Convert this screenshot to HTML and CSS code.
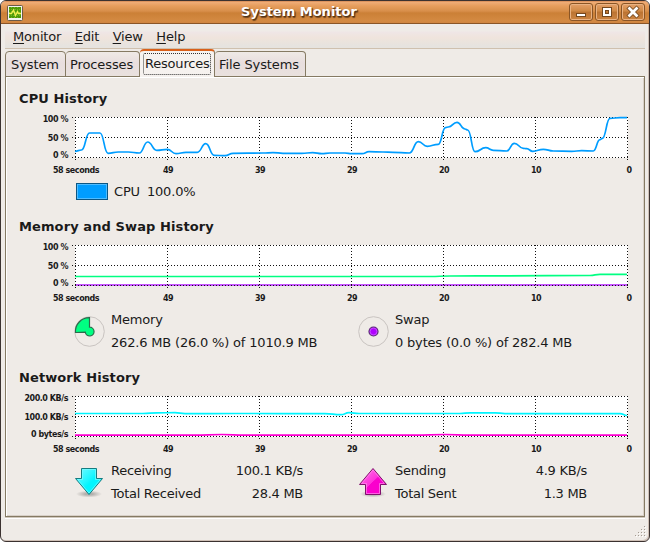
FILE: index.html
```
<!DOCTYPE html>
<html lang="en">
<head>
    <meta charset="UTF-8">
    <title>System Monitor</title>
    <link rel="stylesheet" href="styles.css">
</head>
<body>

<div class="window">
    <div class="titlebar">
        <svg class="app-icon" width="16" height="16" viewBox="0 0 16 16">
            <rect x="0.5" y="0.5" width="15" height="15" rx="1" fill="#f4f4ee" stroke="#6b5a48"/>
            <rect x="2" y="2" width="12" height="11" fill="#4e9a06"/>
            <path d="M2 4.5H14M2 7.5H14M2 10.5H14M4.5 2V13M7.5 2V13M10.5 2V13" stroke="#73b52b" stroke-dasharray="1 1"/>
            <path d="M2 8.5H4.5L6.5 5L8.5 10.5L10.5 6.5L11.5 8.5H14" fill="none" stroke="#f5f04f" stroke-width="1.3"/>
        </svg>
        <h1>System Monitor</h1>
        <div class="window-buttons">
            <button aria-label="Minimize">
                <svg width="24" height="18"><rect x="7.5" y="10.5" width="9" height="3" fill="#fff" stroke="#74481f"/></svg>
            </button>
            <button aria-label="Maximize">
                <svg width="24" height="18"><rect x="9" y="6" width="6" height="6" fill="none" stroke="#74481f" stroke-width="4"/><rect x="9" y="6" width="6" height="6" fill="none" stroke="#fff" stroke-width="2"/></svg>
            </button>
            <button aria-label="Close">
                <svg width="24" height="18"><path d="M8.5 5.5L15.5 12.5M15.5 5.5L8.5 12.5" stroke="#74481f" stroke-width="4.4" stroke-linecap="square"/><path d="M8.5 5.5L15.5 12.5M15.5 5.5L8.5 12.5" stroke="#fff" stroke-width="2.8" stroke-linecap="square"/></svg>
            </button>
        </div>
    </div>

    <div class="menubar">
        <a><u>M</u>onitor</a>
        <a><u>E</u>dit</a>
        <a><u>V</u>iew</a>
        <a><u>H</u>elp</a>
    </div>

    <div class="tabs">
        <div class="tab tab-system">System</div>
        <div class="tab tab-processes">Processes</div>
        <div class="tab active"><span>Resources</span></div>
        <div class="tab tab-files">File Systems</div>
    </div>

    <div class="page">
        <section class="cpu">
            <h2>CPU History</h2>
            <svg class="chart" width="638" height="72">
                <defs>
                    <g id="grid">
                        <path d="M-3 0.5H553M-3 20.5H553M-3 40.5H553"/>
                        <path d="M0.5 0V45M92.5 0V45M184.5 0V45M276.5 0V45M368.5 0V45M460.5 0V45M552.5 0V45"/>
                    </g>
                    <g id="seconds">
                        <text x="1" y="56">58 seconds</text>
                        <text x="93" y="56">49</text>
                        <text x="185" y="56">39</text>
                        <text x="277" y="56">29</text>
                        <text x="369" y="56">20</text>
                        <text x="461" y="56">10</text>
                        <text x="554" y="56">0</text>
                    </g>
                </defs>
                <g transform="translate(69 11)">
                    <rect class="plot" width="553" height="41"/>
                    <use href="#grid" class="grid"/>
                    <path id="cpu-line" class="line" stroke="#009dff"/>
                    <g class="values">
                        <text x="-7" y="5">100 %</text>
                        <text x="-7" y="24">50 %</text>
                        <text x="-7" y="41">0 %</text>
                    </g>
                    <use href="#seconds" class="seconds"/>
                </g>
            </svg>
            <div class="legend">
                <div class="swatch"></div>
                <span>CPU</span>
                <span class="percent">100.0%</span>
            </div>
        </section>

        <section class="memory">
            <h2>Memory and Swap History</h2>
            <svg class="chart" width="638" height="72">
                <g transform="translate(69 11)">
                    <rect class="plot" width="553" height="41"/>
                    <path id="memory-line" class="line" stroke="#00ff82"/>
                    <path id="swap-line" class="line" stroke="#b41eff"/>
                    <use href="#grid" class="grid"/>
                    <g class="values">
                        <text x="-7" y="5">100 %</text>
                        <text x="-7" y="24">50 %</text>
                        <text x="-7" y="41">0 %</text>
                    </g>
                    <use href="#seconds" class="seconds"/>
                </g>
            </svg>
            <div class="legend">
                <div class="item">
                    <svg class="icon" width="32" height="32">
                        <circle cx="15.5" cy="15.5" r="14.8" fill="none" stroke="#c9c4c1"/>
                        <path d="M15.5 1.7A13.8 13.8 0 0 0 1.5 16.5L11.3 16.2A4.4 4.4 0 1 0 15.5 11.2Z" fill="#00ff82" stroke="#2c6b4c" stroke-width="1.2"/>
                    </svg>
                    <div class="rows">
                        <div>Memory</div>
                        <div>262.6 MB (26.0 %) of 1010.9 MB</div>
                    </div>
                </div>
                <div class="item">
                    <svg class="icon" width="32" height="32">
                        <circle cx="15.5" cy="15.5" r="14.8" fill="none" stroke="#c9c4c1"/>
                        <circle cx="15.5" cy="15.5" r="4.5" fill="#b000ff" stroke="#572d70" stroke-width="1.2"/>
                        <circle cx="15.5" cy="15.5" r="3.4" fill="none" stroke="#ca5cff" stroke-width="0.8"/>
                    </svg>
                    <div class="rows">
                        <div>Swap</div>
                        <div>0 bytes (0.0 %) of 282.4 MB</div>
                    </div>
                </div>
            </div>
        </section>

        <section class="network">
            <h2>Network History</h2>
            <svg class="chart" width="638" height="72">
                <g transform="translate(69 11)">
                    <rect class="plot" width="553" height="41"/>
                    <use href="#grid" class="grid"/>
                    <path id="receive-line" class="line" stroke="#00f5ff"/>
                    <path id="send-line" class="line" stroke="#ff00d2"/>
                    <g class="values">
                        <text x="-7" y="5">200.0 KB/s</text>
                        <text x="-7" y="24">100.0 KB/s</text>
                        <text x="-7" y="41">0 bytes/s</text>
                    </g>
                    <use href="#seconds" class="seconds"/>
                </g>
            </svg>
            <div class="legend">
                <div class="item">
                    <svg class="icon" width="32" height="32">
                        <defs>
                            <radialGradient id="shadow">
                                <stop offset="0.3" stop-color="#000" stop-opacity="0.25"/>
                                <stop offset="1" stop-color="#000" stop-opacity="0"/>
                            </radialGradient>
                            <linearGradient id="cyan" x1="0" y1="0" x2="1" y2="1">
                                <stop offset="0" stop-color="#7dfaff"/>
                                <stop offset="0.45" stop-color="#1cf6ff"/>
                                <stop offset="0.55" stop-color="#00f5ff"/>
                            </linearGradient>
                            <linearGradient id="pink" x1="0" y1="0" x2="1" y2="1">
                                <stop offset="0" stop-color="#ff7de8"/>
                                <stop offset="0.5" stop-color="#ff30dc"/>
                                <stop offset="0.51" stop-color="#fa00cd"/>
                            </linearGradient>
                        </defs>
                        <ellipse cx="15" cy="27" rx="13" ry="3.5" fill="url(#shadow)"/>
                        <path d="M7.5 1.5H22.5V11.5H28.5L15 27.5L1.5 11.5H7.5Z" fill="url(#cyan)" stroke="#157c80"/>
                        <path d="M8.5 2.5H21.5V12.5H26.3L15 26L3.7 12.5H8.5Z" fill="none" stroke="#7dfaff" stroke-opacity="0.7"/>
                    </svg>
                    <div class="rows">
                        <div><span>Receiving</span><span>100.1 KB/s</span></div>
                        <div><span>Total Received</span><span>28.4 MB</span></div>
                    </div>
                </div>
                <div class="item">
                    <svg class="icon" width="32" height="32">
                        <ellipse cx="15" cy="27" rx="13" ry="3.5" fill="url(#shadow)"/>
                        <path d="M15 1.5L28.5 17.5H22.5V27.5H7.5V17.5H1.5Z" fill="url(#pink)" stroke="#80106c"/>
                        <path d="M15 3L26.3 16.5H21.5V26.5H8.5V16.5H3.7Z" fill="none" stroke="#ff8aeb" stroke-opacity="0.7"/>
                    </svg>
                    <div class="rows">
                        <div><span>Sending</span><span>4.9 KB/s</span></div>
                        <div><span>Total Sent</span><span>1.3 MB</span></div>
                    </div>
                </div>
            </div>
        </section>
    </div>

    <div class="statusbar">
        <svg width="12" height="12">
            <path d="M10 0.5h1M7 3.5h4M4 6.5h7M1 9.5h10" stroke="#a39b92" stroke-dasharray="1 2"/>
            <path d="M11 1.5h1M8 4.5h4M5 7.5h7M2 10.5h10" stroke="#fff" stroke-dasharray="1 2"/>
        </svg>
    </div>
</div>

<script src="script.js"></script>
</body>
</html>
```

FILE: styles.css
```
* {
    box-sizing: border-box;
}
body {
    margin: 0;
    background-color: #fff;
    font-family: "DejaVu Sans", sans-serif;
    font-size: 13px;
    letter-spacing: -0.18px;
    color: #1a1a1a;
}
.window {
    width: 650px;
    height: 542px;
    display: flex;
    flex-direction: column;
    background-color: #efebe7;
    border: 1px solid #3b3230;
    border-radius: 6px;
    overflow: hidden;
    box-shadow: inset -1px -1px 0 #cfc0b6;
}
.titlebar {
    height: 23px;
    display: flex;
    align-items: center;
    padding: 0 4px 0 6px;
    background: linear-gradient(#c97b45 0, #f0ad78 1px, #e69d5c 5px, #d88f4b 10px, #cb8036 12px, #d48a42 20px, #cf8440 22px);
    border-bottom: 1px solid #8a5526;
}
.app-icon {
    margin-top: 2px;
}
.titlebar h1 {
    flex: 1;
    margin: 0 0 0 6px;
    font-size: 13px;
    line-height: 22px;
    letter-spacing: 0;
    text-align: center;
    color: #fff;
    text-shadow: 1px 1px 1px #4a2e14, 1px 2px 1px #7a4a20;
}
.window-buttons {
    display: flex;
    gap: 2px;
}
.window-buttons button {
    width: 24px;
    height: 18px;
    padding: 0;
    border: 1px solid #8a5526;
    border-radius: 3px;
    background: linear-gradient(#e4a069, #cf8844 45%, #bb7332 50%, #cd8542);
    box-shadow: inset 0 0 0 1px #e9b283;
}
.window-buttons svg {
    display: block;
    margin: -1px;
}
.menubar {
    height: 25px;
    margin: 0 4px;
    padding: 0 8px;
    display: flex;
    gap: 13.5px;
    line-height: 25px;
    background: linear-gradient(#efebe7 0, #efebe7 7px, #efe6e6 8px, #efe4dc 14px, #e6e3df 22px);
    border-bottom: 1px solid #cfc0ae;
}
.menubar u {
    text-underline-offset: 2px;
}
.tabs {
    height: 28px;
    margin: 0 4px -1px;
    display: flex;
    align-items: flex-end;
    position: relative;
    z-index: 1;
}
.tab {
    height: 26px;
    padding-left: 4px;
    line-height: 26px;
    letter-spacing: -0.1px;
    border: 1px solid #857a63;
    border-left-width: 0;
    border-radius: 4px 4px 0 0;
    background: linear-gradient(#efeae6, #e8dede 45%, #e9e1de);
}
.tab-system {
    width: 61px;
    padding-left: 5px;
    border-left-width: 1px;
}
.tab-processes {
    width: 74px;
}
.tab-files {
    width: 91px;
}
.tab.active {
    width: 75px;
    height: 28px;
    padding: 2px 3px 0 3px;
    letter-spacing: -0.2px;
    border-top: 2px solid #d9601a;
    border-bottom: none;
    background: #f6f2ef;
}
.tab.active span {
    display: block;
    height: 22px;
    padding-left: 1px;
    line-height: 20px;
    border: 1px dotted #333;
    border-radius: 2px;
}
.page {
    height: 441px;
    margin: 0 4px;
    padding: 13px 0 0;
    border: 1px solid #857a63;
    box-shadow: inset 1px 1px 0 #fff, inset -1px -1px 0 #d8d0c8, 0 1px 0 #d0c8be, 0 2px 0 #fff;
}
section {
    height: 151px;
}
.cpu {
    height: 128px;
}
h2 {
    height: 16px;
    margin: 0;
    padding-left: 13px;
    font-size: 13px;
    line-height: 18px;
    letter-spacing: 0.1px;
}
.chart {
    display: block;
}
.plot {
    fill: #fff;
}
.grid {
    fill: none;
    stroke: #111;
    stroke-width: 1;
    stroke-dasharray: 1 2;
}
.line {
    fill: none;
    stroke-width: 1.7;
}
.values, .seconds {
    font-size: 8px;
    font-weight: bold;
    letter-spacing: -0.45px;
    fill: #1a1a1a;
}
.values {
    text-anchor: end;
}
.seconds {
    text-anchor: middle;
}
.legend {
    display: flex;
    padding: 2px 0 0 68px;
    line-height: 23px;
}
.swatch {
    width: 32px;
    height: 17px;
    margin: 3px 6px 0 2px;
    background-color: #009dff;
    border: 1px solid #0b5683;
    box-shadow: inset 0 0 0 1px #4fbcff;
}
.percent {
    margin-left: 7px;
}
.item {
    width: 284px;
    display: flex;
}
.icon {
    width: 32px;
    margin: 8px 5px 0 0;
}
.rows {
    width: 192px;
    white-space: nowrap;
}
.rows div {
    display: flex;
    justify-content: space-between;
}
.network .rows {
    letter-spacing: -0.27px;
}
.statusbar {
    flex: 1;
    display: flex;
    justify-content: flex-end;
    padding: 9px 3px 0 0;
}
```

FILE: script.js
```
// points are x, y in plot pixels
const series = {
    'cpu-line': [[0, 34.3], [6.5, 33], [14.5, 16], [25, 16], [33, 36.3], [43.3, 35], [53.3, 35], [64.3, 36], [72.7, 25], [81.7, 33.3],
        [92.3, 32.3], [101, 36.7], [111, 35.3], [122.3, 35.3], [130.7, 26.7], [139.3, 38.3], [150, 38.7], [158, 36.3], [188, 36],
        [198, 35.6], [208, 36.3], [226.7, 36.3], [237.7, 35.7], [246.7, 36.7], [255, 36], [270, 36], [276.7, 36.7], [287, 36.7],
        [294, 34.7], [308, 35], [318, 35.3], [334.3, 36], [343.3, 24.7], [352.3, 29.3], [363.3, 27.3], [370.5, 10.7], [373.3, 10],
        [382, 5.3], [390, 12], [392.7, 13], [400, 34.7], [410.7, 30.7], [418.3, 33.3], [431.7, 34], [439.3, 26.3], [448.3, 31.3],
        [451.7, 31.7], [457.7, 34.3], [468.3, 32.3], [478.3, 34], [496.7, 34.3], [506.7, 33.7], [518.3, 34], [525, 22.7],
        [527.3, 21.3], [535, 1.3], [545, 0.7], [552, 0.7]],
    'memory-line': [[0, 31.5], [355, 31.5], [375, 31], [430, 30.8], [515, 30.5], [525, 29.4], [552, 29.4]],
    'swap-line': [[0, 40], [552, 40]],
    'receive-line': [[0, 17.5], [68, 17.5], [82, 16.8], [100, 16.7], [110, 17.6], [160, 17.5], [250, 17.6], [266, 18.7], [274, 16.6],
        [284, 17.5], [385, 17.5], [395, 16.8], [420, 16.8], [430, 17.6], [545, 17.6], [552, 19.5]],
    'send-line': [[0, 39.2], [120, 39.2], [147, 38.5], [170, 39.2], [340, 39.2], [370, 38.5], [395, 39.2], [552, 39.2]]
};

for (const id in series) {
    const points = series[id];
    let d = 'M' + points[0];
    for (let i = 1; i < points.length; i++) {
        const [x0, y0] = points[i - 1];
        const [x1, y1] = points[i];
        const mid = (x0 + x1) / 2;
        d += ` C${mid} ${y0} ${mid} ${y1} ${x1} ${y1}`;
    }
    document.getElementById(id).setAttribute('d', d);
}
```
